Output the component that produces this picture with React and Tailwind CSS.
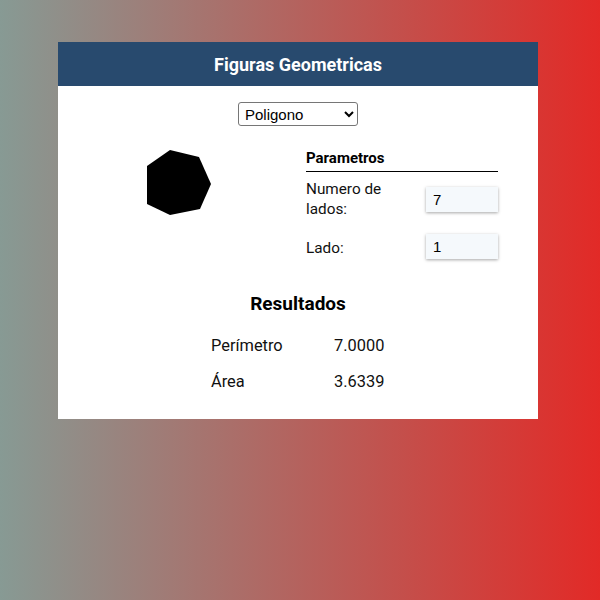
import { useState } from 'react';

const Heptagon = () => (
    <svg width="68" height="70" viewBox="0 0 68 70" className="block">
        <polygon points="24,1 53,8 65,35 54,60 24,66 1,55 1,17" fill="#000" />
    </svg>
);

const App = () => {
    const [lados, setLados] = useState('7');
    const [lado, setLado] = useState('1');

    return (
        <div className="min-h-[600px] w-full bg-linear-to-r/srgb from-[#879a94] to-[#e22a27] pt-[42px] font-['Roboto',sans-serif]">
            <div className="ml-[58px] w-[480px] bg-white">
                <header className="h-11 flex items-center justify-center bg-[#284a6e]">
                    <h1 className="text-[18px] font-bold text-white">Figuras Geometricas</h1>
                </header>

                <div className="flex justify-center mt-4">
                    <select className="w-[120px] h-6 border border-[#767676] rounded-[3px] bg-white text-[15px] text-black font-['Liberation_Sans',Arial,sans-serif] pl-[2px]">
                        <option>Poligono</option>
                        <option>Circulo</option>
                        <option>Triangulo</option>
                    </select>
                </div>

                <div className="flex mt-[22px]">
                    <div className="w-[248px] pl-[88px] pt-[1px]">
                        <Heptagon />
                    </div>
                    <div className="w-[192px]">
                        <div className="text-[15px] font-bold text-black leading-5 pb-[3px] border-b border-black">
                            Parametros
                        </div>
                        <div className="flex items-center justify-between mt-[7px] h-10">
                            <label className="w-[100px] text-[15.3px] leading-5 text-[#111]">Numero de lados:</label>
                            <input
                                value={lados}
                                onChange={(e) => setLados(e.target.value)}
                                className="w-[72px] h-[25px] bg-[#f5f9fc] shadow-[0_1px_3px_rgba(0,0,0,0.35)] pl-[7px] pr-2 text-[15px] text-black font-['Liberation_Sans',Arial,sans-serif] outline-none"
                            />
                        </div>
                        <div className="flex items-center justify-between mt-[15px] h-[25px]">
                            <label className="text-[15.3px] leading-5 text-[#111] pt-[3px]">Lado:</label>
                            <input
                                value={lado}
                                onChange={(e) => setLado(e.target.value)}
                                className="w-[72px] h-[25px] bg-[#f5f9fc] shadow-[0_1px_3px_rgba(0,0,0,0.35)] pl-[7px] pr-2 text-[15px] text-black font-['Liberation_Sans',Arial,sans-serif] outline-none"
                            />
                        </div>
                    </div>
                </div>

                <h2 className="mt-[33px] text-center text-[19px] leading-6 font-bold text-black">Resultados</h2>

                <div className="mx-auto mt-[18px] pb-[25px] w-[174px] grid grid-cols-[123px_1fr] gap-y-3 text-[16.4px] leading-6 text-[#111]">
                    <span>Perímetro</span>
                    <span>7.0000</span>
                    <span>Área</span>
                    <span>3.6339</span>
                </div>
            </div>
        </div>
    );
};

export default App;
